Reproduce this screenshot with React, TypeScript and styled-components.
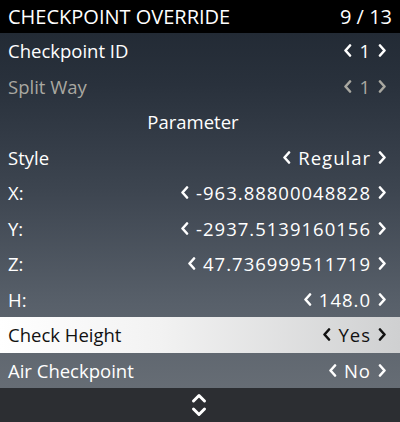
import React from 'react';
import styled, { createGlobalStyle } from 'styled-components';

const GlobalStyle = createGlobalStyle`
    html, body {
        margin: 0;
        padding: 0;
        background: #000;
    }
    body {
        font-family: "Open Sans", "Noto Sans", sans-serif;
    }
`;

const Menu = styled.div`
    width: 400px;
    height: 422px;
    display: flex;
    flex-direction: column;
    background: linear-gradient(180deg, #1f2731 0%, #29313c 20%, #3d4550 45%, #58606a 72%, #6c7279 100%);
    color: #fff;
    overflow: hidden;
`;

const Header = styled.div`
    height: 33px;
    flex: none;
    background: #000;
    display: flex;
    align-items: center;
    justify-content: space-between;
    padding: 0 8px 0 8px;
    font-size: 20px;
`;

const Row = styled.div<{ $selected?: boolean; $disabled?: boolean }>`
    height: 35.5px;
    flex: none;
    display: flex;
    align-items: center;
    justify-content: space-between;
    padding: 0 13px 0 8px;
    font-size: 18.5px;
    color: ${p => (p.$selected ? '#111' : p.$disabled ? '#a9a8a1' : '#fff')};
    background: ${p => (p.$selected ? 'linear-gradient(90deg, #ffffff 0%, #f2f2f2 40%, #cfd0d1 100%)' : 'transparent')};
`;

const Separator = styled.div`
    height: 35.5px;
    flex: none;
    display: flex;
    align-items: center;
    justify-content: center;
    font-size: 18.5px;
    padding-right: 14px;
`;

const Value = styled.div`
    display: flex;
    align-items: center;
    gap: 7px;
`;

const ValueText = styled.span`
    letter-spacing: 1px;
`;

const Footer = styled.div`
    flex: 1;
    background: #2c2e32;
    display: flex;
    align-items: center;
    justify-content: center;
    padding-right: 2px;
`;

function Chevron({ dir }: { dir: 'left' | 'right' }) {
    const d = dir === 'left' ? 'M7 1.5 L2.5 6.5 L7 11.5' : 'M2 1.5 L6.5 6.5 L2 11.5';
    return (
        <svg width="9" height="13" viewBox="0 0 9 13">
            <path d={d} fill="none" stroke="currentColor" strokeWidth="2.6" strokeLinecap="round" strokeLinejoin="round" />
        </svg>
    );
}

function UpDown() {
    return (
        <svg width="16" height="26" viewBox="0 0 16 26">
            <path d="M2.5 9 L8 3.5 L13.5 9" fill="none" stroke="#fff" strokeWidth="3" strokeLinecap="round" strokeLinejoin="round" />
            <path d="M2.5 17 L8 22.5 L13.5 17" fill="none" stroke="#fff" strokeWidth="3" strokeLinecap="round" strokeLinejoin="round" />
        </svg>
    );
}

interface ItemProps {
    label: string;
    value: string;
    selected?: boolean;
    disabled?: boolean;
}

function Item({ label, value, selected, disabled }: ItemProps) {
    return (
        <Row $selected={selected} $disabled={disabled}>
            <span>{label}</span>
            <Value>
                <Chevron dir="left" />
                <ValueText>{value}</ValueText>
                <Chevron dir="right" />
            </Value>
        </Row>
    );
}

export default function App() {
    return (
        <>
            <GlobalStyle />
            <Menu>
                <Header>
                    <span>CHECKPOINT OVERRIDE</span>
                    <span>9 / 13</span>
                </Header>
                <Item label="Checkpoint ID" value="1" />
                <Item label="Split Way" value="1" disabled />
                <Separator>Parameter</Separator>
                <Item label="Style" value="Regular" />
                <Item label="X:" value="-963.88800048828" />
                <Item label="Y:" value="-2937.5139160156" />
                <Item label="Z:" value="47.736999511719" />
                <Item label="H:" value="148.0" />
                <Item label="Check Height" value="Yes" selected />
                <Item label="Air Checkpoint" value="No" />
                <Footer>
                    <UpDown />
                </Footer>
            </Menu>
        </>
    );
}
